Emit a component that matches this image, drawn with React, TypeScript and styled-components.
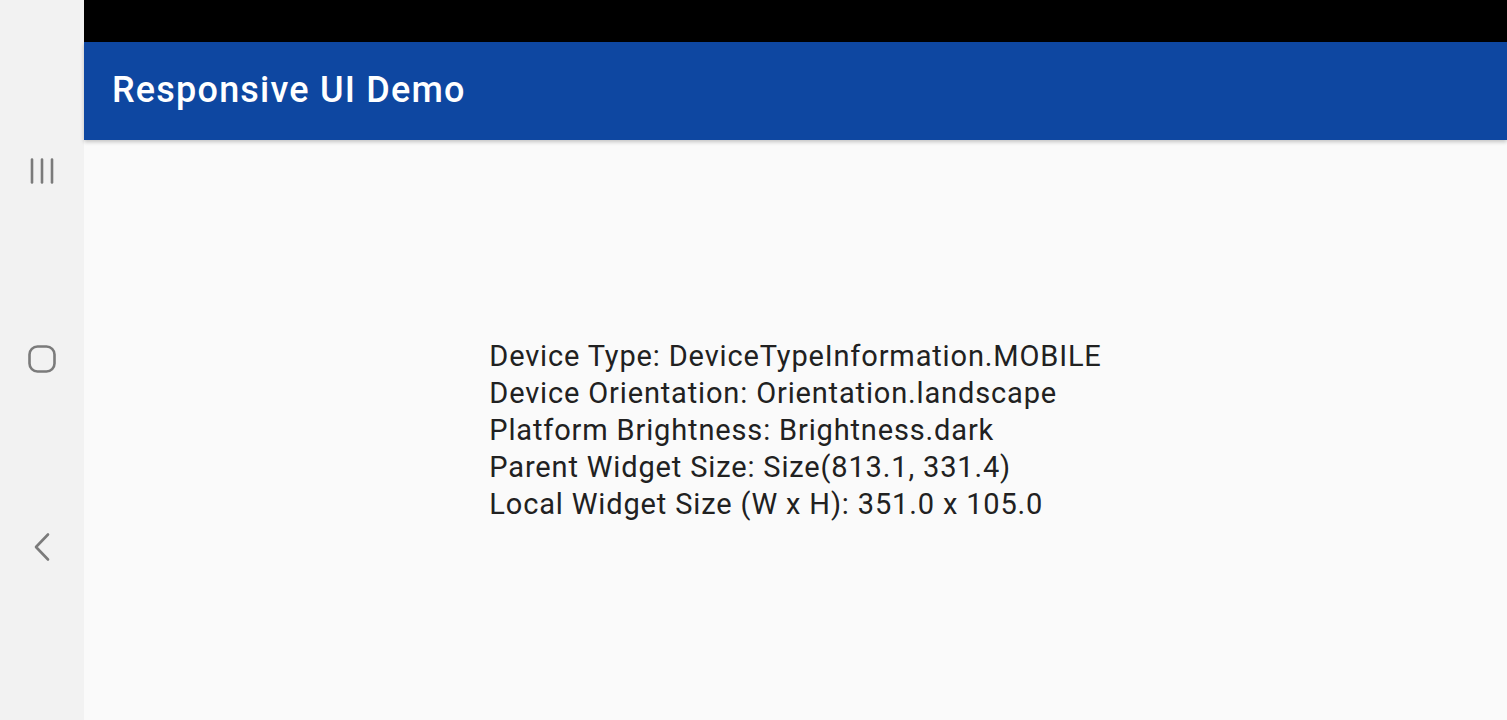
import React from 'react';
import styled, { createGlobalStyle } from 'styled-components';

const GlobalStyle = createGlobalStyle`
  html, body {
    margin: 0;
    padding: 0;
    height: 100%;
    overflow: hidden;
  }
  #root {
    height: 100%;
  }
  body {
    font-family: Roboto, "Noto Sans", "Liberation Sans", sans-serif;
  }
`;

const infoLines = [
  'Device Type: DeviceTypeInformation.MOBILE',
  'Device Orientation: Orientation.landscape',
  'Platform Brightness: Brightness.dark',
  'Parent Widget Size: Size(813.1, 331.4)',
  'Local Widget Size (W x H): 351.0 x 105.0',
];

export default function App() {
  return (
    <>
      <GlobalStyle />
      <Screen>
        <NavBar>
          <NavButton aria-label="Recents">
            <svg width="28" height="28" viewBox="0 0 28 28">
              <g stroke="#7b7b7b" strokeWidth="2.6" strokeLinecap="round">
                <line x1="4" y1="2.5" x2="4" y2="25.5" />
                <line x1="14" y1="2.5" x2="14" y2="25.5" />
                <line x1="24" y1="2.5" x2="24" y2="25.5" />
              </g>
            </svg>
          </NavButton>
          <NavButton aria-label="Home">
            <svg width="30" height="30" viewBox="0 0 30 30">
              <rect x="2.5" y="2.5" width="25" height="25" rx="8" fill="none" stroke="#7b7b7b" strokeWidth="2.6" />
            </svg>
          </NavButton>
          <NavButton aria-label="Back">
            <svg width="30" height="30" viewBox="0 0 30 30">
              <polyline points="21,2.5 9,15 21,27.5" fill="none" stroke="#7b7b7b" strokeWidth="2.6" strokeLinecap="round" strokeLinejoin="round" />
            </svg>
          </NavButton>
        </NavBar>
        <Main>
          <StatusBar />
          <AppBar>
            <Title>Responsive UI Demo</Title>
          </AppBar>
          <Body>
            <InfoBlock>
              {infoLines.map((line) => (
                <InfoLine key={line}>{line}</InfoLine>
              ))}
            </InfoBlock>
          </Body>
        </Main>
      </Screen>
    </>
  );
}

const Screen = styled.div`
  display: flex;
  width: 100%;
  height: 720px;
`;

const NavBar = styled.nav`
  width: 84px;
  flex-shrink: 0;
  background-color: #f2f2f2;
  display: flex;
  flex-direction: column;
  align-items: center;
  justify-content: center;
  gap: 140px;
  padding-bottom: 2px;
`;

const NavButton = styled.div`
  width: 48px;
  height: 48px;
  display: flex;
  align-items: center;
  justify-content: center;
`;

const Main = styled.div`
  flex: 1;
  display: flex;
  flex-direction: column;
  background-color: #fafafa;
`;

const StatusBar = styled.div`
  height: 42px;
  background-color: #000;
`;

const AppBar = styled.header`
  height: 98px;
  background-color: #0e47a1;
  display: flex;
  align-items: center;
  padding-left: 28px;
  box-shadow: 0 2px 4px rgba(0, 0, 0, 0.22);
  position: relative;
  z-index: 1;
`;

const Title = styled.h1`
  margin: 0 0 2px;
  color: #fff;
  font-size: 36px;
  font-weight: 500;
  letter-spacing: 1.2px;
`;

const Body = styled.main`
  flex: 1;
  display: flex;
  align-items: center;
  justify-content: center;
`;

const InfoBlock = styled.div`
  display: flex;
  flex-direction: column;
`;

const InfoLine = styled.div`
  font-size: 29px;
  line-height: 37px;
  letter-spacing: 0.85px;
  color: #212121;
`;
